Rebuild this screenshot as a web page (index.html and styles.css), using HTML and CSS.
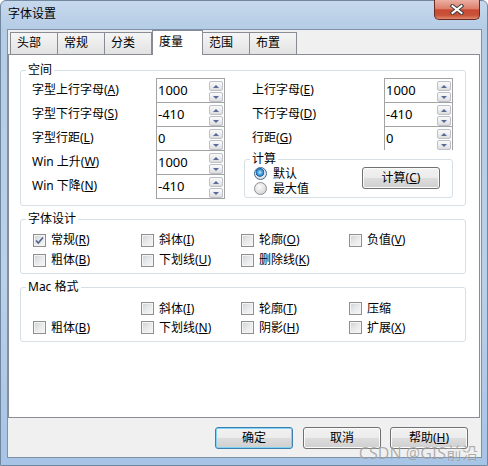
FILE: index.html
```html
<!DOCTYPE html>
<html lang="zh-CN">
<head>
<meta charset="utf-8">
<title>字体设置</title>
<link rel="stylesheet" href="styles.css">
</head>
<body>
<div class="window">
  <div class="titlebar">
    <span class="title">字体设置</span>
    <div class="close">
      <svg width="14" height="11" viewBox="0 0 14 11"><path d="M2.5 2 L11.5 9 M11.5 2 L2.5 9" stroke="#3b3b3b" stroke-width="4" stroke-linecap="square"/><path d="M2.5 2 L11.5 9 M11.5 2 L2.5 9" stroke="#fff" stroke-width="2" stroke-linecap="square"/></svg>
    </div>
  </div>
  <div class="client">
    <div class="tabs">
      <div class="tab">头部</div>
      <div class="tab">常规</div>
      <div class="tab">分类</div>
      <div class="tab active">度量</div>
      <div class="tab">范围</div>
      <div class="tab">布置</div>
    </div>
    <div class="panel">
      <fieldset class="group">
        <legend>空间</legend>
        <div class="space-body">
          <div class="col col-left">
            <div class="row"><span class="lbl">字型上行字母(<u>A</u>)</span><div class="spin"><span class="val">1000</span><span class="spin-btns"><span class="sb up"></span><span class="sb down"></span></span></div></div>
            <div class="row"><span class="lbl">字型下行字母(<u>S</u>)</span><div class="spin"><span class="val">-410</span><span class="spin-btns"><span class="sb up"></span><span class="sb down"></span></span></div></div>
            <div class="row"><span class="lbl">字型行距(<u>L</u>)</span><div class="spin"><span class="val">0</span><span class="spin-btns"><span class="sb up"></span><span class="sb down"></span></span></div></div>
            <div class="row"><span class="lbl">Win 上升(<u>W</u>)</span><div class="spin"><span class="val">1000</span><span class="spin-btns"><span class="sb up"></span><span class="sb down"></span></span></div></div>
            <div class="row"><span class="lbl">Win 下降(<u>N</u>)</span><div class="spin"><span class="val">-410</span><span class="spin-btns"><span class="sb up"></span><span class="sb down"></span></span></div></div>
          </div>
          <div class="col col-right">
            <div class="row"><span class="lbl">上行字母(<u>E</u>)</span><div class="spin"><span class="val">1000</span><span class="spin-btns"><span class="sb up"></span><span class="sb down"></span></span></div></div>
            <div class="row"><span class="lbl">下行字母(<u>D</u>)</span><div class="spin"><span class="val">-410</span><span class="spin-btns"><span class="sb up"></span><span class="sb down"></span></span></div></div>
            <div class="row"><span class="lbl">行距(<u>G</u>)</span><div class="spin cut"><span class="val">0</span><span class="spin-btns"><span class="sb up"></span><span class="sb down"></span></span></div></div>
            <fieldset class="group calc">
              <legend>计算</legend>
              <div class="calc-body">
                <div class="radios">
                  <div class="radio-row"><span class="radio on"></span><span>默认</span></div>
                  <div class="radio-row"><span class="radio"></span><span>最大值</span></div>
                </div>
                <div class="btn calc-btn">计算(<u>C</u>)</div>
              </div>
            </fieldset>
          </div>
        </div>
      </fieldset>

      <fieldset class="group design">
        <legend>字体设计</legend>
        <div class="checks">
          <div class="chk"><span class="cb on"><svg width="11" height="11" viewBox="0 0 11 11"><path d="M2 5.5 L4.3 8 L9 2.5" fill="none" stroke="#4f6390" stroke-width="1.6"/></svg></span><span>常规(<u>R</u>)</span></div>
          <div class="chk"><span class="cb"></span><span>斜体(<u>I</u>)</span></div>
          <div class="chk"><span class="cb"></span><span>轮廓(<u>O</u>)</span></div>
          <div class="chk"><span class="cb"></span><span>负值(<u>V</u>)</span></div>
          <div class="chk"><span class="cb"></span><span>粗体(<u>B</u>)</span></div>
          <div class="chk"><span class="cb"></span><span>下划线(<u>U</u>)</span></div>
          <div class="chk"><span class="cb"></span><span>删除线(<u>K</u>)</span></div>
        </div>
      </fieldset>

      <fieldset class="group mac">
        <legend>Mac 格式</legend>
        <div class="checks">
          <div class="chk empty"></div>
          <div class="chk"><span class="cb"></span><span>斜体(<u>I</u>)</span></div>
          <div class="chk"><span class="cb"></span><span>轮廓(<u>T</u>)</span></div>
          <div class="chk"><span class="cb"></span><span>压缩</span></div>
          <div class="chk"><span class="cb"></span><span>粗体(<u>B</u>)</span></div>
          <div class="chk"><span class="cb"></span><span>下划线(<u>N</u>)</span></div>
          <div class="chk"><span class="cb"></span><span>阴影(<u>H</u>)</span></div>
          <div class="chk"><span class="cb"></span><span>扩展(<u>X</u>)</span></div>
        </div>
      </fieldset>
    </div>
    <div class="buttons">
      <div class="btn default">确定</div>
      <div class="btn">取消</div>
      <div class="btn help">帮助(<u>H</u>)</div>
    </div>
  </div>
</div>
<div class="watermark">CSDN @GIS前沿</div>
</body>
</html>
```
FILE: styles.css
```css
* { box-sizing: border-box; }
html, body { margin: 0; padding: 0; }
body {
  width: 488px; height: 466px; overflow: hidden; position: relative;
  font: 12px/14px "Noto Sans", "Noto Sans CJK SC", sans-serif;
  text-autospace: no-autospace;
  color: #000; background: #fff;
}
u { text-decoration: underline; text-underline-offset: 1px; }

.window {
  width: 488px; height: 466px;
  border: 1px solid #71869f;
  border-radius: 6px 6px 0 0;
  background: linear-gradient(180deg, #c6d8ec 0, #b5cce6 28px, #b9d0e9 60%, #a7c4e6 100%);
  display: flex; flex-direction: column;
}
.titlebar {
  height: 28px; flex: none;
  display: flex; align-items: flex-start; justify-content: space-between;
  padding-left: 7px;
}
.title { margin-top: 6px; line-height: 14px; }
.close {
  margin: -1px 7px 0 0;
  width: 46px; height: 20px;
  border: 1px solid #6b2a22; border-top: none;
  border-radius: 0 0 5px 5px;
  background: linear-gradient(180deg, #eab0a3 0%, #dd7f6c 45%, #c94a33 52%, #c85238 80%, #e08a6e 100%);
  display: flex; align-items: center; justify-content: center;
}
.client {
  margin: 0 5px 0 6px;
  height: 429px; flex: none;
  border: 1px solid #7f91a9;
  background: #f0f0f0;
  display: flex; flex-direction: column;
}
.tabs {
  height: 24px; flex: none;
  display: flex; align-items: flex-end;
  padding-left: 2px;
}
.tab {
  width: 48px; height: 22px;
  margin-right: -1px;
  border: 1px solid #898c95; border-bottom: none;
  background: linear-gradient(180deg, #f5f5f5 0%, #ececec 50%, #e2e2e2 100%);
  padding-left: 6px; line-height: 20px;
}
.tab.active {
  width: 51px; height: 25px;
  margin: 0 -1px -1px 1px;
  background: #fff;
  position: relative; z-index: 1;
  line-height: 21px;
}
.panel {
  width: 472px; height: 364px; flex: none;
  border: 1px solid #898c95;
  background: #fff;
  padding: 8px 13px 0 11px;
}
fieldset.group {
  margin: 0; padding: 0; min-width: 0;
  border: 1px solid #d5dfe5; border-radius: 3px;
}
fieldset.group legend {
  margin-left: 5px; padding: 0 2px;
  line-height: 14px; font-size: 12px;
}
.space-body { display: flex; padding: 1px 0 7px 11px; }
.col-left { width: 193px; margin-right: 27px; }
.col-right { width: 201px; }
.row { display: flex; height: 24px; align-items: flex-start; }
.lbl { line-height: 24px; white-space: nowrap; }
.col-left .lbl { width: 124px; }
.col-right .lbl { width: 132px; }
.spin {
  width: 69px; height: 25px; flex: none;
  border: 1px solid #a3a3a3;
  background: #fff;
  display: flex; position: relative;
}
.spin.cut { height: 24px; border-bottom: none; }
.val { flex: 1; padding-left: 1px; line-height: 23px; font-size: 13px; }
.spin-btns {
  width: 15px; display: flex; flex-direction: column; gap: 1px;
  padding: 2px 1px 0 0;
}
.sb {
  height: 10px; width: 14px;
  border: 1px solid #bcc0c7; border-radius: 2px;
  background: linear-gradient(180deg, #fafafa 0%, #eeeeee 50%, #dcdcdc 100%);
  display: flex; align-items: center; justify-content: center;
}
.sb::after {
  content: ""; width: 0; height: 0;
  border-left: 3px solid transparent; border-right: 3px solid transparent;
}
.sb.up::after { border-bottom: 3px solid #56699a; }
.sb.down::after { border-top: 3px solid #56699a; }

fieldset.calc {
  margin: 2px 0 0 -8px; width: 209px;
}
.calc-body { display: flex; align-items: flex-start; padding: 0 12px 1px 9px; }
.radios { display: flex; flex-direction: column; }
.radio-row { display: flex; align-items: center; gap: 6px; height: 15px; line-height: 15px; }
.radio {
  width: 13px; height: 13px; border-radius: 50%;
  border: 1px solid #8c8f92;
  background: radial-gradient(circle at 40% 35%, #fbfbfb 0%, #e2e2e2 55%, #c6c6c6 100%);
}
.radio.on {
  border-color: #3a6c92;
  background: radial-gradient(circle at 45% 40%, #bfe6fb 0%, #4aa6e6 25%, #1c63a6 45%, #e6e6e6 52%, #dadada 100%);
}
.btn {
  width: 78px; height: 22px;
  border: 1px solid #707070; border-radius: 3px;
  background: linear-gradient(180deg, #f2f2f2 0%, #ebebeb 50%, #dddddd 51%, #cfcfcf 100%);
  box-shadow: inset 0 0 0 1px #fbfbfb;
  text-align: center; line-height: 20px;
}
.calc-btn { margin: 1px 0 0 auto; }

fieldset.design, fieldset.mac { margin-top: 6px; }
.checks {
  display: grid;
  grid-template-columns: 108px 100px 108px 1fr;
}
.design .checks { grid-auto-rows: 20px; padding: 4px 0 3px 12px; }
.mac .checks { grid-auto-rows: 19px; padding: 5px 0 4px 12px; }
.chk { display: flex; align-items: center; gap: 5px; white-space: nowrap; }
.cb {
  width: 13px; height: 13px; flex: none;
  border: 1px solid #8e8f8f;
  background: linear-gradient(135deg, #cdd0d4 0%, #e8e9ea 50%, #f7f7f7 100%);
  box-shadow: inset 0 0 0 1px #f4f4f4;
  display: flex; align-items: center; justify-content: center;
}
.cb svg { display: block; }

.buttons {
  display: flex; justify-content: flex-end;
  padding: 9px 13px 0 0;
}
.buttons .btn { margin-left: 10px; }
.buttons .help { margin-left: 9px; }
.btn.default {
  border-color: #3c7fb1;
  box-shadow: inset 0 0 0 1px #7fd3f5;
}
.watermark {
  position: absolute; right: 10px; bottom: 3px;
  font-size: 16px; line-height: 20px;
  color: rgba(110, 110, 110, 0.55);
  text-shadow: 0 0 1px rgba(255,255,255,0.6);
}
```
